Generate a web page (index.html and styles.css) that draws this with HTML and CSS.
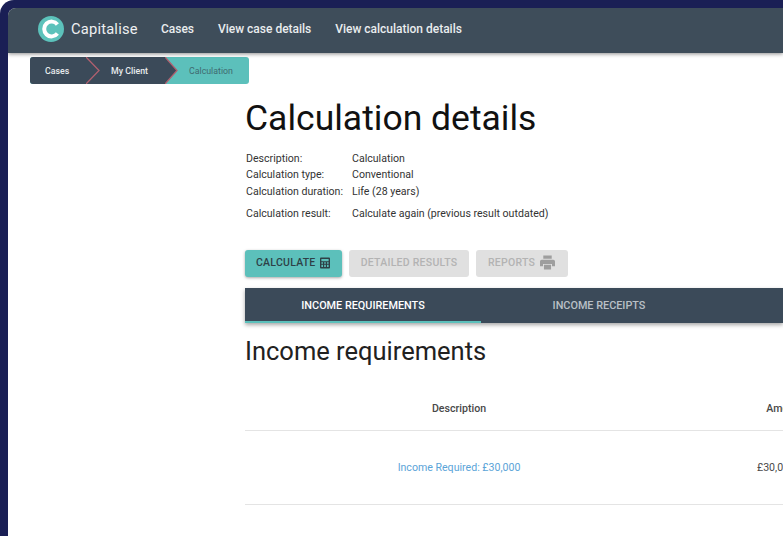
FILE: index.html
```html
<!DOCTYPE html>
<html lang="en">
<head>
<meta charset="utf-8">
<title>Calculation details</title>
<link rel="stylesheet" href="styles.css">
</head>
<body>
<div class="window">
  <header class="appbar">
    <div class="brand">
      <svg class="logo" width="26" height="26" viewBox="0 0 26 26" aria-hidden="true">
        <circle cx="13" cy="13" r="13" fill="#5cc2bb"/>
        <path d="M19.4 8.4A7.4 7.4 0 1 0 19.4 17.6" fill="none" stroke="#fff" stroke-width="4"/>
      </svg>
      <span class="brand-name">Capitalise</span>
    </div>
    <nav class="nav">
      <a class="nav-link">Cases</a>
      <a class="nav-link">View case details</a>
      <a class="nav-link">View calculation details</a>
    </nav>
  </header>

  <div class="crumbs">
    <span class="crumb crumb-first">Cases</span>
    <svg class="chev" width="16" height="27" viewBox="0 0 16 27" aria-hidden="true">
      <path d="M0 0L13 13.5L0 27Z" fill="#3b4a59"/>
      <path d="M0 0L13 13.5L0 27" fill="none" stroke="#b0606f" stroke-width="1.3"/>
    </svg>
    <span class="crumb crumb-mid">My Client</span>
    <svg class="chev chev-active" width="16" height="27" viewBox="0 0 16 27" aria-hidden="true">
      <path d="M0 0L12 13.5L0 27Z" fill="#3b4a59"/>
      <path d="M0 0L12 13.5L0 27" fill="none" stroke="#b0606f" stroke-width="1.3"/>
    </svg>
    <span class="crumb crumb-last">Calculation</span>
  </div>

  <main class="content">
    <h1 class="title">Calculation details</h1>
    <div class="facts">
      <span>Description:</span><span>Calculation</span>
      <span>Calculation type:</span><span>Conventional</span>
      <span>Calculation duration:</span><span>Life (28 years)</span>
      <span class="fact-gap">Calculation result:</span><span class="fact-gap">Calculate again (previous result outdated)</span>
    </div>

    <div class="actions">
      <button class="btn btn-primary">CALCULATE
        <svg width="10" height="12" viewBox="0 0 11 12" aria-hidden="true">
          <path fill-rule="evenodd" d="M1 0H10A1 1 0 0 1 11 1V11A1 1 0 0 1 10 12H1A1 1 0 0 1 0 11V1A1 1 0 0 1 1 0ZM1.5 1.5V4H9.5V1.5ZM1.5 5.2V6.8H3.3V5.2ZM4.6 5.2V6.8H6.4V5.2ZM7.7 5.2V6.8H9.5V5.2ZM1.5 8V10.5H3.3V8ZM4.6 8V10.5H6.4V8ZM7.7 8V10.5H9.5V8Z" fill="#2e4047"/>
        </svg>
      </button>
      <button class="btn btn-disabled btn-details">DETAILED RESULTS</button>
      <button class="btn btn-disabled btn-reports">REPORTS
        <svg width="15" height="15" viewBox="0 0 16 15" aria-hidden="true">
          <path d="M3.5 0H12.5V3.5H3.5ZM1.8 4.5H14.2A1.8 1.8 0 0 1 16 6.3V11.5H12.8V9H3.2V11.5H0V6.3A1.8 1.8 0 0 1 1.8 4.5ZM4.2 10H11.8V15H4.2Z" fill="#9e9e9e"/>
        </svg>
      </button>
    </div>

    <div class="tabs">
      <div class="tab tab-active">INCOME REQUIREMENTS</div>
      <div class="tab">INCOME RECEIPTS</div>
    </div>

    <h2 class="subtitle">Income requirements</h2>

    <div class="table">
      <div class="row row-head">
        <div class="cell">Description</div>
        <div class="cell">Amount</div>
      </div>
      <div class="row row-body">
        <div class="cell cell-link">Income Required: £30,000</div>
        <div class="cell cell-amount">£30,000</div>
      </div>
    </div>
  </main>
</div>
</body>
</html>
```
FILE: styles.css
```css
* { box-sizing: border-box; }
html { margin: 0; height: 536px; overflow: hidden; background: #fff; }
body {
  margin: 0;
  height: 536px;
  overflow: hidden;
  background: #1a1f55;
  border-top-left-radius: 14px;
  padding: 8px 0 0 8px;
  font-family: Roboto, "Liberation Sans", sans-serif;
  color: #212121;
}
.window {
  width: 775px;
  height: 528px;
  background: #fff;
  border-top-left-radius: 8px;
  overflow: hidden;
}
.appbar {
  height: 45px;
  background: #3e4d5a;
  display: flex;
  align-items: center;
  padding: 0 0 3px 30px;
  box-shadow: 0 1px 4px rgba(0,0,0,.45);
  position: relative;
}
.brand { display: flex; align-items: center; gap: 7px; width: 123px; }
.logo { flex: none; }
.brand-name { color: #eef0f2; font-size: 14.7px; letter-spacing: .2px; }
.nav { display: flex; gap: 24px; }
.nav-link { color: #e9ecee; font-size: 12px; font-weight: 500; letter-spacing: -.01px; }
.crumbs {
  display: flex;
  height: 27px;
  width: 219px;
  margin: 4px 0 0 22px;
  border-radius: 3px;
  overflow: hidden;
  font-size: 8.8px;
  font-weight: 500;
  background: #5cc0bb;
}
.crumb { display: flex; align-items: center; background: #3b4a59; color: #e9ecee; }
.crumb-first { width: 56px; padding-left: 15px; }
.crumb-mid { width: 63px; padding-left: 9px; }
.crumb-last { flex: 1; padding-left: 8px; background: transparent; color: #3f6a70; font-weight: 400; }
.chev { flex: none; background: #3b4a59; }
.chev-active { background: #5cc0bb; }
.content { padding: 0 0 0 237px; }
.title { margin: 13px 0 0; font-size: 35.5px; font-weight: 400; line-height: 42px; color: #111; }
.facts {
  display: grid;
  grid-template-columns: 106px auto;
  justify-content: start;
  margin: 12px 0 0 1px;
  font-size: 10.6px;
  line-height: 16.4px;
  color: #333;
}
.fact-gap { margin-top: 6px; }
.actions { display: flex; gap: 7px; margin-top: 27px; }
.btn {
  height: 27px;
  border: 0;
  border-radius: 3px;
  padding: 0 11px 1px;
  font: 500 10.5px Roboto, sans-serif;
  letter-spacing: .25px;
  white-space: nowrap;
  display: flex;
  align-items: center;
  gap: 4px;
}
.btn-primary { width: 97px; background: #5cc0bb; color: #2e4047; box-shadow: 0 1px 3px rgba(0,0,0,.35); }
.btn-disabled { background: #e0e0e0; color: #b3b3b3; }
.btn-details { width: 120px; justify-content: center; }
.btn-reports { width: 92px; gap: 5px; padding-left: 12px; }
.tabs {
  display: flex;
  height: 35px;
  margin-top: 11px;
  background: #3b4a59;
  box-shadow: 0 2px 4px rgba(0,0,0,.35);
}
.tab {
  width: 236px;
  display: flex;
  align-items: center;
  justify-content: center;
  color: #b9c0c6;
  font-size: 10.85px;
  font-weight: 500;
}
.tab-active { color: #fff; box-shadow: inset 0 -2px 0 #5cc0bb; }
.subtitle { margin: 13px 0 0; font-size: 25.5px; font-weight: 400; line-height: 30px; color: #212121; }
.table { margin-top: 19px; width: 652px; font-size: 10.6px; }
.row { display: grid; grid-template-columns: 428px 224px; border-bottom: 1px solid #e4e4e4; text-align: center; align-items: center; }
.row-head { height: 46px; padding-top: 2px; font-weight: 500; color: #484848; }
.row-body { height: 74px; color: #4a4a4a; }
.cell-link { color: #5ba4d8; }
.cell-amount { padding-right: 18px; }
```
